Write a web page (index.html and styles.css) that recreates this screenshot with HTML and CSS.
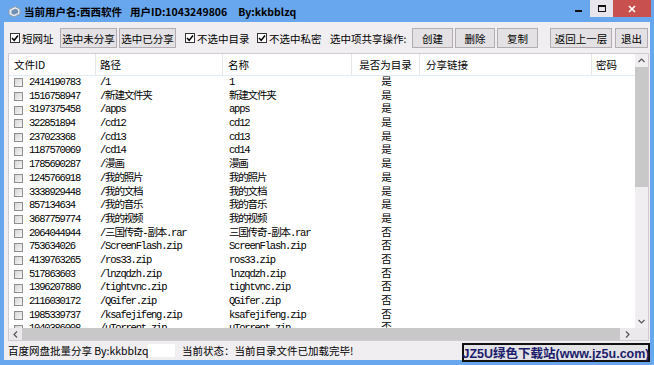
FILE: index.html
```html
<!DOCTYPE html>
<html>
  <head>
    <meta charset="utf-8">
    <title>百度网盘批量分享</title>
    <link rel="stylesheet" href="styles.css">
  </head>
  <body>
    <div class="window">
      <div class="titlebar">
        <svg class="app-icon" width="13" height="13" viewBox="0 0 13 13">
          <path d="M1 4.5 L7 1.5 L12 4 L12 9 L6 12 L1 9.5 Z" fill="#e4e9ef" stroke="#8d9bab" stroke-width="1"/>
          <path d="M3.5 5.5 L7.5 3.8 L10 5 L10 8 L6 9.8 L3.5 8.5 Z" fill="#6f8fb5"/>
        </svg>
        <span class="title">当前用户名:西西软件</span>
        <span class="title title-id">用户ID:1043249806</span>
        <span class="title title-by">By:kkbblzq</span>
        <div class="caption">
          <div class="cap-btn cap-min"><span class="min-bar"></span></div>
          <div class="cap-btn cap-max"><span class="max-box"></span></div>
          <div class="cap-btn cap-close">
            <svg width="8" height="8" viewBox="0 0 8 8">
              <path d="M1 1 L7 7 M7 1 L1 7" stroke="#fff" stroke-width="1.6"/>
            </svg>
          </div>
        </div>
      </div>

      <div class="client">
        <div class="toolbar">
          <label class="check check-short"><span class="check-box"><svg width="8" height="8" viewBox="0 0 8 8"><path d="M1 4 L3.2 6.3 L7 1.5" fill="none" stroke="#000" stroke-width="1.5"/></svg></span>短网址</label>
          <button class="btn btn-sel">选中未分享</button>
          <button class="btn btn-sel">选中已分享</button>
          <label class="check check-wide gap-dir"><span class="check-box"><svg width="8" height="8" viewBox="0 0 8 8"><path d="M1 4 L3.2 6.3 L7 1.5" fill="none" stroke="#000" stroke-width="1.5"/></svg></span>不选中目录</label>
          <label class="check check-wide gap-priv"><span class="check-box"><svg width="8" height="8" viewBox="0 0 8 8"><path d="M1 4 L3.2 6.3 L7 1.5" fill="none" stroke="#000" stroke-width="1.5"/></svg></span>不选中私密</label>
          <span class="op-label">选中项共享操作:</span>
          <button class="btn btn-op">创建</button>
          <button class="btn btn-op btn-narrow">删除</button>
          <button class="btn btn-op">复制</button>
          <button class="btn btn-back">返回上一层</button>
          <button class="btn btn-exit">退出</button>
        </div>

        <div class="list">
          <div class="list-main">
            <div class="list-head">
              <div class="head-cell head-id">文件ID</div>
              <div class="head-cell head-path">路径</div>
              <div class="head-cell head-name">名称</div>
              <div class="head-cell head-dir">是否为目录</div>
              <div class="head-cell head-link">分享链接</div>
              <div class="head-cell head-pwd">密码</div>
            </div>
            <div class="list-body">
              <div class="row"><div class="cell cell-id"><span class="row-check"></span>2414190783</div><div class="cell cell-path">/1</div><div class="cell cell-name">1</div><div class="cell cell-dir">是</div><div class="cell"></div><div class="cell"></div></div>
              <div class="row"><div class="cell cell-id"><span class="row-check"></span>1516758947</div><div class="cell cell-path">/新建文件夹</div><div class="cell cell-name">新建文件夹</div><div class="cell cell-dir">是</div><div class="cell"></div><div class="cell"></div></div>
              <div class="row"><div class="cell cell-id"><span class="row-check"></span>3197375458</div><div class="cell cell-path">/apps</div><div class="cell cell-name">apps</div><div class="cell cell-dir">是</div><div class="cell"></div><div class="cell"></div></div>
              <div class="row"><div class="cell cell-id"><span class="row-check"></span>322851894</div><div class="cell cell-path">/cd12</div><div class="cell cell-name">cd12</div><div class="cell cell-dir">是</div><div class="cell"></div><div class="cell"></div></div>
              <div class="row"><div class="cell cell-id"><span class="row-check"></span>237023368</div><div class="cell cell-path">/cd13</div><div class="cell cell-name">cd13</div><div class="cell cell-dir">是</div><div class="cell"></div><div class="cell"></div></div>
              <div class="row"><div class="cell cell-id"><span class="row-check"></span>1187570069</div><div class="cell cell-path">/cd14</div><div class="cell cell-name">cd14</div><div class="cell cell-dir">是</div><div class="cell"></div><div class="cell"></div></div>
              <div class="row"><div class="cell cell-id"><span class="row-check"></span>1785690287</div><div class="cell cell-path">/漫画</div><div class="cell cell-name">漫画</div><div class="cell cell-dir">是</div><div class="cell"></div><div class="cell"></div></div>
              <div class="row"><div class="cell cell-id"><span class="row-check"></span>1245766918</div><div class="cell cell-path">/我的照片</div><div class="cell cell-name">我的照片</div><div class="cell cell-dir">是</div><div class="cell"></div><div class="cell"></div></div>
              <div class="row"><div class="cell cell-id"><span class="row-check"></span>3338929448</div><div class="cell cell-path">/我的文档</div><div class="cell cell-name">我的文档</div><div class="cell cell-dir">是</div><div class="cell"></div><div class="cell"></div></div>
              <div class="row"><div class="cell cell-id"><span class="row-check"></span>857134634</div><div class="cell cell-path">/我的音乐</div><div class="cell cell-name">我的音乐</div><div class="cell cell-dir">是</div><div class="cell"></div><div class="cell"></div></div>
              <div class="row"><div class="cell cell-id"><span class="row-check"></span>3687759774</div><div class="cell cell-path">/我的视频</div><div class="cell cell-name">我的视频</div><div class="cell cell-dir">是</div><div class="cell"></div><div class="cell"></div></div>
              <div class="row"><div class="cell cell-id"><span class="row-check"></span>2064044944</div><div class="cell cell-path">/三国传奇-副本.rar</div><div class="cell cell-name">三国传奇-副本.rar</div><div class="cell cell-dir">否</div><div class="cell"></div><div class="cell"></div></div>
              <div class="row"><div class="cell cell-id"><span class="row-check"></span>753634026</div><div class="cell cell-path">/ScreenFlash.zip</div><div class="cell cell-name">ScreenFlash.zip</div><div class="cell cell-dir">否</div><div class="cell"></div><div class="cell"></div></div>
              <div class="row"><div class="cell cell-id"><span class="row-check"></span>4139763265</div><div class="cell cell-path">/ros33.zip</div><div class="cell cell-name">ros33.zip</div><div class="cell cell-dir">否</div><div class="cell"></div><div class="cell"></div></div>
              <div class="row"><div class="cell cell-id"><span class="row-check"></span>517863603</div><div class="cell cell-path">/lnzqdzh.zip</div><div class="cell cell-name">lnzqdzh.zip</div><div class="cell cell-dir">否</div><div class="cell"></div><div class="cell"></div></div>
              <div class="row"><div class="cell cell-id"><span class="row-check"></span>1396207880</div><div class="cell cell-path">/tightvnc.zip</div><div class="cell cell-name">tightvnc.zip</div><div class="cell cell-dir">否</div><div class="cell"></div><div class="cell"></div></div>
              <div class="row"><div class="cell cell-id"><span class="row-check"></span>2116030172</div><div class="cell cell-path">/QGifer.zip</div><div class="cell cell-name">QGifer.zip</div><div class="cell cell-dir">否</div><div class="cell"></div><div class="cell"></div></div>
              <div class="row"><div class="cell cell-id"><span class="row-check"></span>1985339737</div><div class="cell cell-path">/ksafejifeng.zip</div><div class="cell cell-name">ksafejifeng.zip</div><div class="cell cell-dir">否</div><div class="cell"></div><div class="cell"></div></div>
              <div class="row"><div class="cell cell-id"><span class="row-check"></span>1040386008</div><div class="cell cell-path">/uTorrent.zip</div><div class="cell cell-name">uTorrent.zip</div><div class="cell cell-dir">否</div><div class="cell"></div><div class="cell"></div></div>
            </div>
            <div class="hscroll">
              <div class="hs-arrow">
                <svg width="5" height="7" viewBox="0 0 5 7"><path d="M4 0.5 L1 3.5 L4 6.5" fill="none" stroke="#555" stroke-width="1.2"/></svg>
              </div>
              <div class="hs-thumb"></div>
              <div class="hs-arrow hs-arrow-right">
                <svg width="5" height="7" viewBox="0 0 5 7"><path d="M1 0.5 L4 3.5 L1 6.5" fill="none" stroke="#555" stroke-width="1.2"/></svg>
              </div>
            </div>
          </div>
          <div class="vscroll">
            <div class="vs-arrow">
              <svg width="7" height="5" viewBox="0 0 7 5"><path d="M0.5 4 L3.5 1 L6.5 4" fill="none" stroke="#555" stroke-width="1.2"/></svg>
            </div>
            <div class="vs-thumb"></div>
            <div class="vs-track"></div>
            <div class="vs-arrow">
              <svg width="7" height="5" viewBox="0 0 7 5"><path d="M0.5 1 L3.5 4 L6.5 1" fill="none" stroke="#555" stroke-width="1.2"/></svg>
            </div>
            <div class="vs-corner"></div>
          </div>
        </div>

        <div class="statusbar">
          <span class="status-app">百度网盘批量分享 By:kkbblzq</span>
          <span class="status-gap"></span>
          <span class="status-text">当前状态：当前目录文件已加载完毕!</span>
        </div>
      </div>

      <div class="watermark">JZ5U绿色下载站(www.jz5u.com)</div>
    </div>
  </body>
</html>
```

FILE: styles.css
```css
/* Reset */
* {
  margin: 0;
  padding: 0;
  box-sizing: border-box;
}

body {
  background-color: #fff;
  color: #000;
  font-family: "Noto Sans CJK SC", sans-serif;
  font-size: 10.5px;
}

/* Window frame */
.window {
  position: relative;
  width: 654px;
  height: 365px;
  background-color: #68a6ee;
  display: flex;
  flex-direction: column;
  overflow: hidden;
}

.titlebar {
  height: 22px;
  display: flex;
  align-items: center;
  padding: 0 3px 0 8px;
  flex-shrink: 0;
}

.app-icon {
  margin-right: 3px;
}

.title {
  font-weight: bold;
  white-space: nowrap;
}

.title-id {
  margin-left: 8px;
}

.title-by {
  margin-left: 11px;
}

.caption {
  margin-left: auto;
  align-self: flex-start;
  display: flex;
}

.cap-btn {
  height: 17px;
  display: flex;
  align-items: center;
  justify-content: center;
}

.cap-min {
  width: 23px;
}

.min-bar {
  width: 7px;
  height: 2px;
  margin-top: 4px;
  background-color: #111;
}

.cap-max {
  width: 23px;
  background-color: #e8e6ec;
}

.max-box {
  width: 8px;
  height: 7px;
  border: 1px solid #111;
  border-top-width: 2px;
}

.cap-close {
  width: 38px;
  background-color: #c8504f;
}

/* Client area */
.client {
  flex: 1;
  margin: 0 4px 5px;
  background-color: #f0eef0;
  display: flex;
  flex-direction: column;
}

.toolbar {
  height: 31px;
  display: flex;
  align-items: center;
  gap: 2px;
  padding: 1px 0 0 6px;
  flex-shrink: 0;
}

.check {
  display: flex;
  align-items: center;
  gap: 2px;
  white-space: nowrap;
}

.check-box {
  width: 10px;
  height: 10px;
  border: 1px solid #333;
  background-color: #fff;
  display: flex;
  align-items: center;
  justify-content: center;
}

.check-short {
  width: 48px;
}

.check-wide {
  width: 66px;
}

.gap-dir {
  margin-left: 7px;
}

.gap-priv {
  margin-left: 4px;
}

.op-label {
  width: 80px;
  margin-left: 5px;
  white-space: nowrap;
}

.btn {
  height: 20px;
  font: inherit;
  color: #000;
  background-color: #e3e1e4;
  border: 1px solid #b3adb3;
  white-space: nowrap;
}

.btn-sel {
  width: 57px;
}

.btn-op {
  width: 41px;
}

.btn-narrow {
  width: 40px;
}

.btn-back {
  width: 62px;
  margin-left: 10px;
}

.btn-exit {
  width: 33px;
  margin-left: 1px;
}

/* File list */
.list {
  height: 288px;
  margin: 0 1px 0 4px;
  border: 1px solid #cfcbd0;
  background-color: #fff;
  display: flex;
  flex-shrink: 0;
}

.list-main {
  flex: 1;
  min-width: 0;
  display: flex;
  flex-direction: column;
}

.list-head,
.row {
  display: grid;
  grid-template-columns: 87px 127px 129px 68px 172px 1fr;
}

.list-head {
  height: 22px;
  border-bottom: 1px solid #e2eaf2;
  flex-shrink: 0;
}

.head-cell {
  line-height: 21px;
  border-right: 1px solid #e6e6e6;
  white-space: nowrap;
  padding-left: 5px;
}

.head-path,
.head-pwd {
  padding-left: 4px;
}

.head-dir {
  padding-left: 0;
  text-align: center;
}

.head-link {
  padding-left: 6px;
}

.head-pwd {
  border-right: none;
}

.list-body {
  flex: 1;
  overflow: hidden;
}

.row {
  height: 13.7px;
  line-height: 13.7px;
  font-family: "Liberation Mono", "Noto Sans CJK SC", monospace;
  font-size: 10.5px;
  letter-spacing: -1.2px;
  white-space: nowrap;
}

.cell {
  overflow: hidden;
}

.cell-id {
  display: flex;
  align-items: center;
  gap: 6px;
  padding-left: 5px;
}

.row-check {
  width: 9px;
  height: 9px;
  flex-shrink: 0;
  border: 1px solid #8e8e8e;
  background: linear-gradient(135deg, #d6d6d6, #f7f7f7);
}

.cell-path {
  padding-left: 4px;
}

.cell-name {
  padding-left: 6px;
}

.cell-dir {
  text-align: center;
}

/* Scrollbars */
.hscroll {
  height: 12px;
  display: flex;
  background-color: #ebe9ec;
  flex-shrink: 0;
}

.hs-arrow {
  width: 13px;
  display: flex;
  align-items: center;
  justify-content: center;
}

.hs-arrow-right {
  width: 15px;
}

.hs-thumb {
  flex: 1;
  background-color: #c8c8c8;
}

.vscroll {
  width: 13px;
  display: flex;
  flex-direction: column;
  background-color: #f0eef0;
}

.vs-arrow {
  height: 13px;
  display: flex;
  align-items: center;
  justify-content: center;
}

.vs-thumb {
  height: 120px;
  background-color: #c8c8c8;
}

.vs-track {
  flex: 1;
}

.vs-corner {
  height: 12px;
  background-color: #ebe9ec;
}

/* Status bar */
.statusbar {
  flex: 1;
  display: flex;
  align-items: center;
  padding-left: 4px;
  white-space: nowrap;
}

.status-app {
  width: 140px;
}

.status-gap {
  width: 27px;
  height: 13px;
  margin-right: 7px;
  background-color: #fff;
}

/* Watermark overlay */
.watermark {
  position: absolute;
  right: 4px;
  bottom: 3px;
  width: 188px;
  height: 19px;
  border: 2px solid #111;
  background-color: #e3e3e6;
  color: #1c1c6c;
  font-family: "Liberation Sans", "Noto Sans CJK SC", sans-serif;
  font-size: 12.5px;
  font-weight: bold;
  display: flex;
  align-items: center;
  justify-content: center;
  white-space: nowrap;
}
```
